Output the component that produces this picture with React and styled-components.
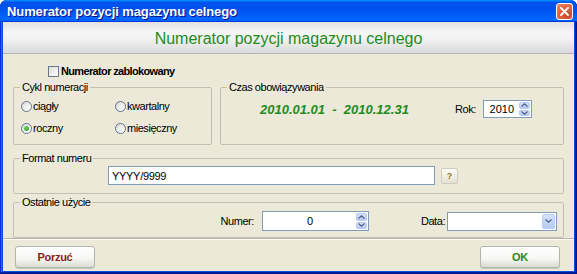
import React from 'react';
import styled, { createGlobalStyle } from 'styled-components';

const Global = createGlobalStyle`
  html, body { margin: 0; padding: 0; background: #fff; }
  body { font-family: "Liberation Sans", Arial, sans-serif; }
  * { box-sizing: border-box; }
`;

const Window = styled.div`
  width: 577px;
  height: 274px;
  display: flex;
  flex-direction: column;
  background: #0c4fd8;
  border-radius: 7px 7px 0 0;
  overflow: hidden;
  box-shadow: inset -1px -1px #00138c, inset 1px 1px #0831d9, inset -2px -2px #001ea0, inset 2px 2px #166aee;
`;

const TitleBar = styled.div`
  height: 22px;
  flex: none;
  display: flex;
  align-items: center;
  justify-content: space-between;
  padding: 1px 4px 0 7px;
  background: linear-gradient(180deg, #0997ff, #0053ee 10%, #0050ee 40%, #0066ff 85%, #0066ff 92%, #005bff 95%, #003dd7 97%, #003dd7);
  color: #fff;
  font: bold 13px "Liberation Sans", Arial, sans-serif;
  letter-spacing: -0.1px;
  text-shadow: 1px 1px #0f1089;
`;

const CloseButton = styled.div`
  width: 17px;
  height: 17px;
  border: 1px solid #fff;
  border-radius: 3px;
  background: radial-gradient(circle at 70% 75%, #cc4625, #e0643f 55%, #f0916e);
  display: flex;
  align-items: center;
  justify-content: center;
`;

const Client = styled.div`
  flex: 1;
  margin: 0 3px 3px;
  background: #ece9d8;
  display: flex;
  flex-direction: column;
`;

const Header = styled.div`
  height: 32px;
  flex: none;
  display: flex;
  align-items: center;
  justify-content: center;
  background: linear-gradient(180deg, #e2e2e2 0%, #f6f6f6 35%, #f2f2f2 55%, #d9d9d9 100%);
  border-bottom: 1px solid #b4b4b4;
  color: #1f8a22;
  font-size: 16px;
  padding-top: 2px;
`;

const Body = styled.div`
  flex: 1;
  display: flex;
  flex-direction: column;
  padding: 0 10px;
`;

const CheckRow = styled.label`
  display: flex;
  align-items: center;
  gap: 2px;
  height: 14px;
  margin: 10px 0 0 35px;
  font-size: 11px;
  font-weight: bold;
  letter-spacing: -0.65px;
  color: #000;
`;

const CheckBox = styled.span`
  width: 11px;
  height: 11px;
  border: 1px solid #6a7785;
  background: linear-gradient(135deg, #dcdcd7, #fff);
`;

const GroupRow = styled.div`
  display: flex;
  gap: 8px;
  height: 64px;
  margin-top: 3px;
`;

const Group = styled.fieldset`
  margin: 0;
  padding: ${p => p.$pad || '0'};
  border: 1px solid #c3c0b1;
  border-radius: 2px;
  min-width: 0;
  width: ${p => p.$width || 'auto'};
  flex: ${p => (p.$width ? 'none' : '1')};
  height: ${p => p.$height || 'auto'};
  margin-top: ${p => p.$top || '0'};
`;

const Legend = styled.legend`
  margin-left: 6px;
  padding: 0 2px;
  font-size: 11px;
  line-height: 12px;
  letter-spacing: -0.45px;
  color: #000;
`;

const RadioGrid = styled.div`
  display: grid;
  grid-template-columns: 94px 1fr;
  grid-auto-rows: 14px;
  row-gap: 8px;
  padding: 6px 0 0 7px;
`;

const RadioItem = styled.label`
  display: flex;
  align-items: center;
  gap: 1px;
  font-size: 11px;
  letter-spacing: -0.45px;
  color: #000;
`;

const RadioCircle = styled.span`
  width: 11px;
  height: 11px;
  border-radius: 50%;
  border: 1px solid #5d7288;
  background: linear-gradient(135deg, #d6d6d0, #fff 80%);
  display: flex;
  align-items: center;
  justify-content: center;
  &::after {
    content: '';
    width: 5px;
    height: 5px;
    border-radius: 50%;
    background: ${p => (p.$checked ? 'radial-gradient(circle at 35% 35%, #6ad26a, #21a121)' : 'transparent')};
  }
`;

const DateRow = styled.div`
  display: flex;
  align-items: center;
  height: 20px;
  margin-top: 6px;
  padding-left: 39px;
`;

const DateText = styled.span`
  color: #228b22;
  font-size: 13px;
  font-weight: bold;
  font-style: italic;
  white-space: pre;
  width: 195px;
`;

const FieldLabel = styled.span`
  font-size: 11px;
  letter-spacing: -0.45px;
  color: #000;
  margin-right: ${p => p.$gap || '6px'};
`;

const Spin = styled.div`
  width: ${p => p.$width};
  height: ${p => p.$height};
  display: flex;
  align-items: stretch;
  background: #fff;
  border: 1px solid #7f9db9;
  padding: 1px;
`;

const SpinValue = styled.span`
  flex: 1;
  display: flex;
  align-items: center;
  justify-content: center;
  font-size: 11px;
  color: #000;
`;

const SpinButtons = styled.div`
  width: 11px;
  display: flex;
  flex-direction: column;
  gap: 1px;
`;

const SpinBtn = styled.div`
  flex: 1;
  border-radius: 2px;
  background: linear-gradient(180deg, #d6e2fb, #b4c9f4);
  border: 1px solid #b9cbef;
  display: flex;
  align-items: center;
  justify-content: center;
`;

const FormatRow = styled.div`
  display: flex;
  align-items: center;
  gap: 6px;
  padding: 2px 0 0 94px;
`;

const TextInput = styled.div`
  width: 327px;
  height: 19px;
  background: #fff;
  border: 1px solid #7f9db9;
  display: flex;
  align-items: center;
  padding-left: 3px;
  font-size: 11px;
  letter-spacing: -0.3px;
  color: #000;
`;

const SmallButton = styled.div`
  width: 17px;
  height: 16px;
  border: 1px solid #cfccbd;
  border-radius: 2px;
  background: linear-gradient(180deg, #fbfbf8, #e5e2d4);
  display: flex;
  align-items: center;
  justify-content: center;
  font-size: 9px;
  font-weight: bold;
  color: #8c7b2c;
`;

const LastRow = styled.div`
  display: flex;
  align-items: center;
  justify-content: flex-end;
  padding: 3px 6px 0 0;
`;

const Combo = styled.div`
  width: 110px;
  height: 19px;
  background: #fff;
  border: 1px solid #7f9db9;
  display: flex;
  justify-content: flex-end;
  padding: 1px;
`;

const ComboBtn = styled.div`
  width: 13px;
  border-radius: 2px;
  background: linear-gradient(180deg, #d6e2fb, #b4c9f4);
  border: 1px solid #b9cbef;
  display: flex;
  align-items: center;
  justify-content: center;
`;

const Footer = styled.div`
  height: 33px;
  flex: none;
  border-top: 1px solid #b9b6a6;
  box-shadow: inset 0 1px #fbfaf5;
  display: flex;
  justify-content: space-between;
  padding: 7px 14px 0 12px;
`;

const Button = styled.div`
  width: 80px;
  height: 22px;
  border: 1px solid #b4b4ae;
  border-radius: 3px;
  background: linear-gradient(180deg, #ffffff, #f7f7f5 55%, #dcdcd6);
  box-shadow: 0 1px 0 #c8c6bb;
  display: flex;
  align-items: center;
  justify-content: center;
  font-size: 11px;
  font-weight: bold;
  letter-spacing: -0.3px;
  color: ${p => p.$color};
`;

const Chevron = ({ dir }) => (
  <svg width="7" height="4" viewBox="0 0 7 4">
    <path d={dir === 'up' ? 'M0.5 3.5 L3.5 0.8 L6.5 3.5' : 'M0.5 0.5 L3.5 3.2 L6.5 0.5'} fill="none" stroke="#4d6185" strokeWidth="1.2" />
  </svg>
);

const Spinner = ({ value, width, height }) => (
  <Spin $width={width} $height={height}>
    <SpinValue>{value}</SpinValue>
    <SpinButtons>
      <SpinBtn><Chevron dir="up" /></SpinBtn>
      <SpinBtn><Chevron dir="down" /></SpinBtn>
    </SpinButtons>
  </Spin>
);

const Radio = ({ checked, children }) => (
  <RadioItem>
    <RadioCircle $checked={checked} />
    {children}
  </RadioItem>
);

export default function App() {
  return (
    <>
      <Global />
      <Window>
        <TitleBar>
          <span>Numerator pozycji magazynu celnego</span>
          <CloseButton>
            <svg width="9" height="9" viewBox="0 0 9 9">
              <path d="M1 1 L8 8 M8 1 L1 8" stroke="#fff" strokeWidth="1.8" strokeLinecap="round" />
            </svg>
          </CloseButton>
        </TitleBar>
        <Client>
          <Header>Numerator pozycji magazynu celnego</Header>
          <Body>
            <CheckRow>
              <CheckBox />
              Numerator zablokowany
            </CheckRow>
            <GroupRow>
              <Group $width="199px">
                <Legend>Cykl numeracji</Legend>
                <RadioGrid>
                  <Radio>ciągły</Radio>
                  <Radio>kwartalny</Radio>
                  <Radio checked>roczny</Radio>
                  <Radio>miesięczny</Radio>
                </RadioGrid>
              </Group>
              <Group>
                <Legend>Czas obowiązywania</Legend>
                <DateRow>
                  <DateText>2010.01.01  -  2010.12.31</DateText>
                  <FieldLabel $gap="7px">Rok:</FieldLabel>
                  <Spinner value="2010" width="49px" height="18px" />
                </DateRow>
              </Group>
            </GroupRow>
            <Group $height="37px" $top="7px">
              <Legend>Format numeru</Legend>
              <FormatRow>
                <TextInput>YYYY/9999</TextInput>
                <SmallButton>?</SmallButton>
              </FormatRow>
            </Group>
            <Group $height="41px" $top="2px">
              <Legend>Ostatnie użycie</Legend>
              <LastRow>
                <FieldLabel $gap="8px">Numer:</FieldLabel>
                <Spinner value="0" width="107px" height="20px" />
                <FieldLabel style={{ marginLeft: '52px' }} $gap="2px">Data:</FieldLabel>
                <Combo>
                  <ComboBtn><Chevron dir="down" /></ComboBtn>
                </Combo>
              </LastRow>
            </Group>
          </Body>
          <Footer>
            <Button $color="#8b1c1c">Porzuć</Button>
            <Button $color="#1e8a1e">OK</Button>
          </Footer>
        </Client>
      </Window>
    </>
  );
}
